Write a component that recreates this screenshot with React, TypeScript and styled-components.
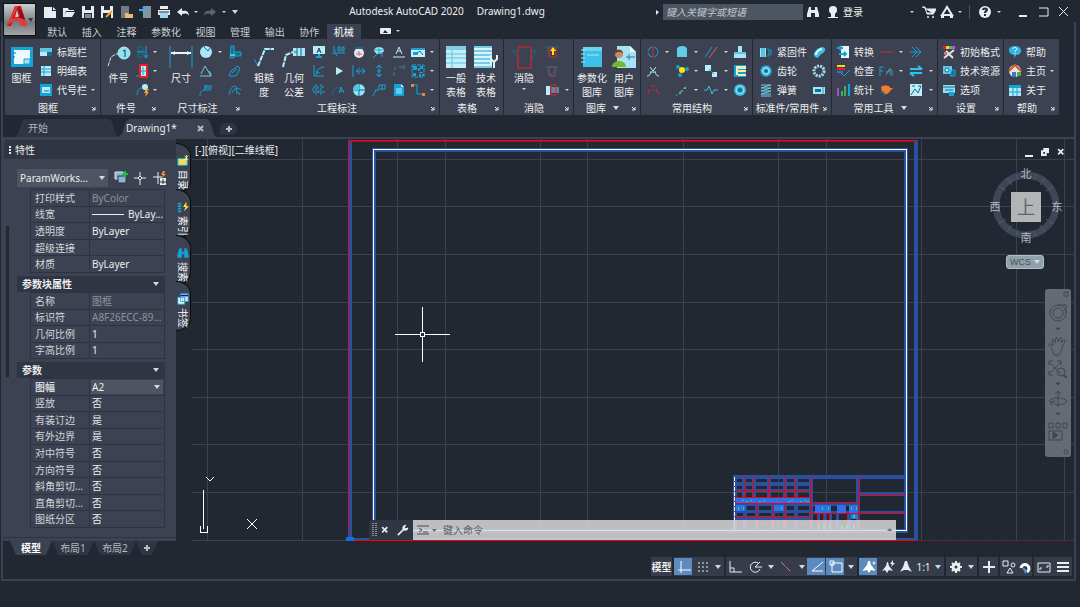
import React, { ReactNode } from 'react';
import styled, { createGlobalStyle, css } from 'styled-components';

const color = {
  bg: '#222831',
  panel: '#3c4251',
  sunken: '#2f3542',
  line: '#2d3340',
  text: '#eceef0',
  dim: '#8d939c',
  active: '#5b8bbf',
};
const C = '#14a3d6';
const L = '#b9ecfb';
const D = '#12708f';
const R = '#ee1c24';
const W = '#e9edf0';

const Global = createGlobalStyle`
  * { box-sizing: border-box; }
  body {
    margin: 0;
    background: ${color.bg};
    color: ${color.text};
    font-family: "Noto Sans", "Noto Sans CJK SC", sans-serif;
    font-size: 10px;
    line-height: 14px;
  }
  button, input, select { font: inherit; color: inherit; border: 0; margin: 0; padding: 0; background: none; }
  button { cursor: pointer; white-space: nowrap; }
  svg { flex: none; }
`;

/* ---------- icons ---------- */

const small: Record<string, ReactNode> = {
  titleBlock: <><path d="M1 3h12v8H1z" fill={L} /><path d="M1 3h12v4H1z" fill="#63c3dd" /><path d="M8 7h5v4H8z" fill={D} /></>,
  list: <><path d="M2 2h10v10H2z" fill={L} /><path d="M2 5h10M2 8h10M5 2v10" stroke={C} /></>,
  codeBlock: <><path d="M1 1h12v12H1z" fill={C} /><path d="M3 4h8v6H3z" fill={L} /><path d="M5 8h5" stroke={D} /></>,
  align: <><path d="M2 2h5v4H2zM2 9h5v3H2z" fill="none" stroke={D} /><path d="M10 1v12m-2-3 2 3 2-3M1 7h8" fill="none" stroke={C} /></>,
  merge: <><path d="M4 1h7v12H4z" fill={L} stroke={R} strokeWidth="2" /><path d="M7 3v8M5 7h5M0 12h3" stroke={C} /></>,
  editBalloon: <><path d="M1 12c1-6 2-7 5-7" fill="none" stroke={C} /><circle cx="9" cy="4" r="3" fill={L} /><path d="m10 6-2 4h2l-1 4 4-5h-2l2-3z" fill="#f2a43c" /></>,
  sphere: <><circle cx="7" cy="7" r="6" fill="#a9e8f8" /><path d="m5 2 4 4 2-3" fill="none" stroke={D} /></>,
  angle: <path d="M1 12h11L6 2 2 10M10 7c1 1 2 3 2 5" fill="none" stroke="#6ecbe4" />,
  chamfer: <path d="M1 13c0-4 1-5 4-6h7M5 3h8M5 5h8M5 7l3-5" fill="none" stroke={C} />,
  pipe: <><path d="M3 1h3v12H2zM6 7h7v4H6" fill={D} stroke={C} /><path d="M2 10h5" stroke={L} /></>,
  slot: <path d="m1 12 2-5 7-5 2 3-4 7zM4 9l5-4" fill="none" stroke={C} />,
  arc: <path d="M1 12c1-6 3-9 6-9M4 10c2-5 6-6 9-3M8 3l1 8M10 9l2 3" fill="none" stroke={C} />,
  textBox: <><path d="M1 1h12v8H1z" fill={L} /><path d="m5 8 2-5 2 5M6 6h2" fill="none" stroke="#1c4152" /><path d="M7 9v3M4 12h6" stroke={C} strokeWidth="2" /></>,
  weld: <path d="M0 8h3l2 3M3 8h10M2 1v5h2M6 2h2v4H6zM10 2h2v4h-2z" fill="none" stroke={C} />,
  clock: <><circle cx="7" cy="8" r="5" fill="#e3e6e6" /><path d="M3 3h8" stroke={D} strokeWidth="2" /><path d="M7 6v5M4 9h6" stroke="#d4707a" /></>,
  fan: <><path d="M2 6a5 4 0 0 1 10 0l-3 3H5z" fill="#a9e7f5" /><path d="m1 13 4-4M7 2v7M3 5h8" stroke={C} /><path d="M6 8h4v4" fill="none" stroke={C} /></>,
  datum: <path d="m4 9 3-7 3 7M5 6h4M1 12h12" fill="none" stroke={L} />,
  card: <><path d="M0 3h14v9H0z" fill="#c9f0fa" /><path d="M0 3h14v2H0zM2 7h5v3H2z" fill={C} /><path d="m6 8 3-2 3 4" fill="none" stroke={D} /></>,
  corner: <path d="M2 1v11h10M4 12c0-5 2-8 8-9M5 6v3h3" fill="none" stroke={C} />,
  play: <path d="M4 3v8l7-4z" fill={L} />,
  leftBar: <path d="M1 1v12M13 7H4m4-3L4 7l4 3M10 4l3 3-3 3" fill="none" stroke={C} />,
  updown: <path d="M7 1v12M4 4l3-3 3 3M4 10l3 3 3-3M5 7h4" fill="none" stroke={C} />,
  dashes: <path d="M2 12V8M2 6l2-3M7 3h4m1-2v4" fill="none" stroke="#4c7f95" />,
  qr: <><path d="M1 1h12v12H1z" fill="none" stroke={C} strokeDasharray="4 1" /><path d="M2 2h4v4H2zM9 2h3v3H9zM2 9h3v3H2zM7 4h2v3H7zM8 8h4v1H8zM8 10h2v3H8zM11 10h2v2h-2z" fill={C} /></>,
  tolerance: <path d="M1 4h5v5H1zM9 1v12M4 1v12M6 9h7M9 4h4" fill="none" stroke={C} strokeDasharray="3 1" />,
  noteA: <><path d="M0 12c1-5 2-7 6-7" fill="none" stroke={D} /><path d="m7 10 2-6 3 6M8 8h3" fill="none" stroke={C} /></>,
  compass: <><circle cx="7" cy="7" r="6" fill="#8fe4f7" /><path d="M7 1v12M1 7h12" stroke={D} /><path d="M7 7V1a6 6 0 0 0-6 6z" fill="#4fc6e8" /></>,
  lineNote: <path d="m1 13 3-6M3 7h4V2h6v4H8M10 2v5" fill="none" stroke={C} />,
  page: <><path d="M2 1h7l3 3v9H2z" fill={C} /><path d="M4 6h6M4 8h6M4 10h6" stroke={L} /><path d="M9 1v3h3z" fill={L} /></>,
  stepLine: <><path d="M2 2h4v9h6" fill="none" stroke={C} /><path d="M0 1h3v3H0zM11 10h3v3h-3z" fill="#e8862c" /></>,
  hideUp: <><path d="M0 2h14M2 3l3 8M12 4l-2 4" fill="none" stroke={D} /><path d="M4 3h7v9H4z" fill="none" stroke={R} /><path d="m8 2-3 4h2v4h2V6h2z" fill="#ffe500" /></>,
  hideEdit: <><path d="M0 3h14M2 4l4 7 6-7" fill="none" stroke={D} /><path d="M4 3h6v9H4z" fill="none" stroke="#a14456" /></>,
  hideView: <><path d="M1 3h4v9H1z" fill={L} /><path d="M6 4h8v6H6z" fill="#5d8a9c" /><path d="M6 2h5v10H6z" fill="none" stroke={R} /></>,
  hole: <><circle cx="7" cy="7" r="5" fill="none" stroke={C} strokeDasharray="6 2" /><path d="M7 1v12" stroke="#b53242" /></>,
  round: <path d="M2 4c0-4 10-4 10 0v8H2z" fill="#62cdea" />,
  diag: <><path d="m1 12 7-10" stroke={C} /><path d="m5 13 8-11" stroke="#e0576a" /></>,
  shaft: <><path d="M5 1h4v6h4v6H1V7h4z" fill="#a8e6f6" /><path d="M1 8h12" stroke={C} /></>,
  cross: <path d="M1 12c3 0 3-2 4-4M13 12c-3 0-3-2-4-4M4 3l3 4 3-4M4 8h6" fill="none" stroke={L} />,
  pins: <><circle cx="3" cy="3" r="2" fill={C} /><circle cx="12" cy="5" r="2" fill={C} /><circle cx="5" cy="11" r="2" fill={C} /><circle cx="7" cy="6" r="3" fill="#ffe500" /></>,
  squares: <><path d="M1 1h6v6H1zM8 8h5v5H8z" fill={L} /><path d="m5 5 5 5" stroke={C} /></>,
  bolt: <><path d="M1 1h12v12H1z" fill={C} /><path d="M3 2h10v3H3zM3 5h2v6H3zM5 6h8v2H5zM5 10h8v2H5z" fill="#f2edb0" /></>,
  redCurve: <path d="m2 11 2-5m1-3h4m1 3 3 5M6 6l2 2" fill="none" stroke={R} />,
  dotLine: <><path d="M1 13 12 2" stroke={C} strokeDasharray="3 2" /><path d="M4 9h2v2H4zM9 4h2v2H9z" fill="#3fc46b" /><path d="M6 7h2v2H6z" fill="#e0576a" /></>,
  wave: <path d="M0 7h3l2-4 3 8 2-4h4" fill="none" stroke="#4fb9d8" />,
  bearing: <><circle cx="7" cy="7" r="6" fill="#35b4df" /><circle cx="7" cy="7" r="4" fill="none" stroke="#9be4f6" /><circle cx="7" cy="7" r="2" fill={D} /></>,
  nut: <><path d="M1 3h6v9H1z" fill="#9ce2f4" /><path d="M3 3v9M5 3v9M8 4h2v7H8M12 4v6" stroke={C} fill="none" /></>,
  rod: <><path d="M2 11c-1-4 3-8 8-9 4 0 4 4 1 6-3 1-3 4-6 5z" fill="#35bfe4" /><path d="M4 10c0-3 3-6 6-6" stroke="#dff8fe" strokeWidth="2" fill="none" /></>,
  gear: <><circle cx="7" cy="7" r="5" fill="#7cd9f0" stroke={C} strokeWidth="2" strokeDasharray="2 1" /><circle cx="7" cy="7" r="2" fill={D} /></>,
  ring: <circle cx="7" cy="7" r="5" fill="none" stroke="#a4e2f1" strokeWidth="3" strokeDasharray="2 1" />,
  spring: <path d="M2 2h10L2 5h10L2 8h10L2 11h10M2 13h10" fill="none" stroke="#6fd1ea" />,
  key: <><path d="M1 4h12v7H1z" fill="#a5e5f5" /><path d="M3 6h6v3H3z" fill={D} /><path d="M11 4v7" stroke={C} /></>,
  convert: <><path d="M5 1h8v12H5z" fill="#e6f8fc" /><path d="M1 3h6m-2-2-2 2 2 2M3 9h7m-2-2 2 2-2 2" fill="none" stroke={C} strokeWidth="2" /></>,
  redLine: <path d="M1 7h13" stroke="#b53242" />,
  forward: <path d="m3 2 5 5-5 5M7 2l5 5-5 5M1 7h11" fill="none" stroke={C} />,
  check: <><path d="M1 2h8" stroke="#ffd21f" strokeWidth="2" /><path d="M1 5h8" stroke={R} strokeWidth="2" /><path d="M1 8h6" stroke="#4a60e8" strokeWidth="2" /><path d="m5 9 3 3 6-6" fill="none" stroke={C} /></>,
  fx: <><path d="M1 12V3h4M1 7h3" fill="none" stroke={C} /><path d="m7 11 4-7v7M7 8l6-2v6" fill="none" stroke="#4f93ab" /></>,
  swap: <path d="M1 5h12M9 2l4 3M1 9h12M1 9l4 3" fill="none" stroke="#31c0ee" strokeWidth="2" />,
  stats: <><path d="M1 5h2v8H1z" fill="#a04fc8" /><path d="M5 8h2v5H5z" fill="#35b35a" /><path d="M8 3h2v10H8z" fill="#35b35a" /><path d="M12 1h2v12h-2z" fill={C} /></>,
  bird: <><path d="M2 4c3-2 9-2 9 1l3 0-3 3c-2 4-6 4-8 1z" fill="#f47b2a" /><path d="M1 9h4v4" stroke={D} fill="none" /></>,
  picture: <><path d="M1 1h12v12H1z" fill="#bfeef9" /><path d="m2 12 4-6 3 4 3-7M9 3h3M3 3h3" fill="none" stroke={D} /></>,
  palette: <><path d="M1 1h3v3H1z" fill={R} /><path d="M4 1h3v3H4z" fill="#ffd21f" /><path d="M7 1h3v3H7z" fill="#3bc45f" /><path d="M10 1h3v3h-3z" fill="#c74be0" /><path d="M2 13 12 5M4 6l7 7" stroke="#e9e3e8" strokeWidth="2" /><path d="M2 7h3v3H2z" fill="#d86f8e" /></>,
  resource: <><path d="M1 2h9v8H1z" fill="#5ccbe9" /><circle cx="5" cy="6" r="2" fill="#d4f5fc" stroke={D} /><path d="M10 6h3v6H8z" fill={D} stroke={C} /></>,
  options: <><path d="M1 2h12v8H1z" fill="#8fdff3" /><path d="M1 4h12M3 7h8" stroke={D} /><path d="M7 9h5v4H7z" fill={C} /></>,
  help: <><path d="M7 1c8 0 8 9 1 9l-2 3v-3C-1 9-1 1 7 1z" fill="#31b5e0" /><path d="M5 4c0-2 4-2 4 0 0 1-2 1-2 3M7 8v1" stroke="#e8fbff" fill="none" /></>,
  home: <><circle cx="7" cy="7" r="6" fill="#e6e3dc" /><path d="m1 7 6-6 6 6" fill="none" stroke="#d5542f" strokeWidth="2" /><path d="M4 8h4v5H4z" fill="#3d78c8" /><path d="M9 8h4v4H9z" fill="#58a93c" /></>,
  about: <><path d="M1 2h12v11H1z" fill="#aee9f8" /><path d="M1 2h12v3H1z" fill={C} /><path d="M1 9h12M5 5v8M9 5v8" stroke={C} /></>,
};

const big: Record<string, ReactNode> = {
  frame: <><path d="M1 2h22v20H1z" fill={C} /><path d="M4 5h16v14H4z" fill="#e9fbff" /><path d="M14 14h6v5h-6z" fill="#a7dfef" stroke={C} /><path d="M3 8h3M3 12h2" stroke={D} /></>,
  balloon: <><path d="m1 21 3-9 5-3h3" fill="none" stroke={L} strokeDasharray="4 1" /><circle cx="17" cy="8" r="6" fill="#8ee0f3" stroke={L} /><path d="m16 6 2-1v7" fill="none" stroke="#16394a" /></>,
  dim: <><path d="M1 1v22M23 1v22" stroke={C} /><path d="M2 8h20" stroke="#dff7fd" strokeWidth="2" /><path d="m2 8 4-2v4zM22 8l-4-2v4z" fill="#dff7fd" /></>,
  rough: <><path d="m2 14 4 7 7-17h9" fill="none" stroke={C} /><path d="m6 21 7-17h9" fill="none" stroke={L} strokeWidth="2" strokeDasharray="5 1" /></>,
  geometry: <><path d="m1 22 3-12 7-3" fill="none" stroke={L} strokeWidth="2" strokeDasharray="5 1" /><path d="M11 3h12v8H11z" fill="#a8e6f6" /><path d="M15 3v8M19 3v8M12 7h3" stroke={D} /></>,
  table: <><path d="M2 1h20v22H2z" fill="#c4eefa" /><path d="M2 1h20v4H2z" fill="#7bcfe9" /><path d="M2 9h20M2 13h20M2 18h20M8 5v18" stroke="#5cc3e2" /></>,
  techTable: <><path d="M0 1h18v22H0z" fill="#d7f4fb" /><path d="M0 2h18M0 6h18M0 10h18M0 14h16M0 18h16M0 22h18" stroke={C} /><path d="M17 10v4l3 3 3-3v-4M20 16v7" fill="none" stroke="#d7f4fb" strokeWidth="2" /></>,
  hide: <><path d="M0 6h25M1 6l10 13h5L24 6" fill="none" stroke={D} /><path d="M6 2h13v21H6z" fill={color.panel} stroke={R} strokeWidth="1" /></>,
  library: <><path d="M3 2h19v20H3z" fill="#3cc0ea" /><path d="M3 2h19v4H3z" fill="#6ad5f2" /><path d="M1 5h4M1 9h4M1 13h4M1 17h4M7 10h12" stroke="#a7e9fa" /></>,
  userLib: <><path d="M5 1h13l6 6v16H5z" fill="#a7e1f3" /><path d="M18 1v6h6z" fill="#e9fbff" /><path d="M14 12h9M17 9v6" stroke="#2a7a96" /><circle cx="7" cy="9" r="4" fill="#c98b5b" /><path d="M3 9c0-6 8-6 8 0-2-3-5-3-8 0z" fill="#6d3f22" /><path d="M0 22c0-8 14-8 14 0z" fill="#76b72c" /></>,
};

const chrome: Record<string, ReactNode> = {
  newFile: <><path d="M1 2h8v4h4v7H1z" fill={W} /><path d="M10 2l3 3h-3z" fill={W} /></>,
  open: <path d="M1 12V3h5l1 2h5v1H4l-2 5 2-4h9l-3 5z" fill={W} />,
  save: <><path d="M1 1h12v12H1z" fill={W} /><path d="M4 1h6v4H4zM3 8h8v5H3z" fill={color.bg} /><path d="M4 10h6M4 12h6" stroke={W} /></>,
  saveAs: <><path d="M1 1h12v12H1z" fill={W} /><path d="M4 1h6v4H4zM3 8h8v5H3z" fill={color.bg} /><path d="m6 12 6-6" stroke="#f0a030" strokeWidth="2" /></>,
  openCloud: <><path d="M2 1h8v12H2z" fill="#747b84" /><path d="M6 8h3l1 1h4v4H6z" fill="#e5c06d" /></>,
  saveCloud: <><path d="M5 1h8v12H5z" fill="#8b929a" /><path d="M1 5h7M5 2l3 3-3 3" stroke="#4aa8ea" strokeWidth="2" fill="none" /></>,
  print: <><path d="M3 1h8v3H3zM1 5h12v5H1z" fill={W} /><path d="M3 8h8v5H3z" fill="#9dd8f1" /><path d="M2 7h10" stroke={color.bg} /></>,
  undo: <path d="m1 7 5-4v3c4-1 7 0 7 5-1-3-4-3-7-2v2z" fill={W} />,
  redo: <path d="M13 7 8 3v3C4 5 1 6 1 11c1-3 4-3 7-2v2z" fill="#5c6470" />,
  binoc: <path d="M3 2h2v3h4V2h2l2 7v3H9V8H5v4H1V9z" fill={W} />,
  user: <><circle cx="7" cy="5" r="4" fill={W} /><path d="M2 12h10v1H2zM5 8h4v4H5z" fill={W} /></>,
  cart: <><path d="M0 2h3l2 7h7M3 4h11l-2 4H5" stroke={W} fill={W} /><circle cx="6" cy="12" r="1" fill={W} /><circle cx="11" cy="12" r="1" fill={W} /></>,
  appStore: <path d="M7 2 2 10h10zM1 12h3M10 12h3" fill="none" stroke={W} strokeWidth="2" />,
  question: <><circle cx="7" cy="7" r="6" fill={W} /><path d="M5 5c0-2 4-2 4 0 0 1-2 1-2 3M7 9v2" fill="none" stroke={color.bg} strokeWidth="2" /></>,
  min: <path d="M3 11h8" stroke={W} strokeWidth="2" />,
  max: <path d="M2 3h9v8H2" fill="none" stroke={W} strokeWidth="1" />,
  close: <path d="m2 2 9 9M11 2l-9 9" stroke={W} />,
  closeBold: <path d="m2 2 9 9M11 2l-9 9" stroke={W} strokeWidth="3" />,
  collapse: <><rect x="2" y="4" width="11" height="6" rx="1" fill={W} /><path d="M5 9l2-3 3 3z" fill={color.bg} /></>,
  blockSel: <><path d="M1 1h8v7H1z" fill="#8fb3d2" stroke="#d8e6f2" /><path d="M4 5h8v7H4z" fill="#8fb3d2" stroke="#2b3342" /><path d="M8 3h6M11 0v6" stroke="#18c63a" strokeWidth="2" /></>,
  pick: <path d="M7 1v4M7 9v5M1 7h4M9 7h4M5 7l2-2 2 2-2 2z" stroke={W} fill="none" />,
  quick: <><path d="M5 1v12M0 6h9" stroke={W} /><path d="m10 0-2 4h2l-1 3 4-4h-2l1-3z" fill="#f08a3c" /><path d="M7 7h6v7H7z" fill={W} /><path d="M10 8v5M7 11h6" stroke={color.bg} /></>,
  /* status bar */
  gridOn: <path d="M4 1v12M1 10h13" stroke="#fff" fill="none" />,
  dots: <path d="M2 3h10M2 7h10M2 11h10" stroke={W} strokeDasharray="2 2" />,
  ortho: <path d="M2 1v11h12M2 8h4v4" stroke={W} fill="none" />,
  polar: <path d="M12 9a5 5 0 1 1-2-6M7 7h7M7 7l5-5" stroke={W} fill="none" />,
  iso: <path d="m2 2 10 10" stroke="#e0707a" strokeDasharray="6 1" />,
  track: <path d="M13 2 2 11h11" stroke="#fff" fill="none" />,
  osnap: <path d="M3 3h10v9H3zM1 1h4v4H1z" stroke="#fff" fill={color.active} />,
  person: <><path d="M6 1h2l1 4 4 5v1l-4-1-2 3-2-3-4 1v-1l4-5z" fill="#fff" /><circle cx="12" cy="3" r="1" fill="none" stroke="#fff" /></>,
  personBolt: <><path d="M6 2h1l1 4 4 5-4-1-2 3-2-3-3 1 4-5z" fill={W} /><path d="M12 0 9 4h2l-1 3 4-4h-2z" fill={W} /></>,
  scale: <path d="M6 1h2l2 6 3 5-4-2H5l-4 2 3-5z" fill={W} />,
  cog: <><circle cx="7" cy="7" r="3" fill="none" stroke={W} strokeWidth="3" /><path d="M7 1v3M7 10v3M1 7h3M10 7h3M3 3l2 2M9 9l2 2M11 3 9 5M5 9l-2 2" stroke={W} strokeWidth="2" /></>,
  plus: <path d="M7 1v12M1 7h12" stroke={W} strokeWidth="2" />,
  shapes: <><path d="M1 1h5v5H1zM5 13l3-5 3 5z" stroke={W} fill="none" /><circle cx="11" cy="5" r="2" stroke={W} fill="none" /></>,
  hardware: <><path d="M3 8a4 4 0 1 1 6 4" stroke="#fff" strokeWidth="3" fill="none" /><path d="M5 9c2 0 3 2 2 4" stroke="#4a9ae0" strokeWidth="2" fill="none" /></>,
  full: <path d="M1 3h12v9H1zM3 10V8h2M11 5v2H9" stroke={W} fill="none" />,
  menu: <path d="M1 3h12M1 7h12M1 11h12" stroke={W} strokeWidth="2" />,
  /* tool tabs */
  toc: <><path d="M1 4h11v8H1z" fill="#ecdf5a" stroke={C} /><path d="m9 1 4 5M13 1 8 6M11 0v6" stroke="#fff58a" /></>,
  index: <><path d="M1 3h4M1 6h4M1 9h4M1 12h4" stroke={C} strokeWidth="2" /><path d="m11 1-4 6h3l-2 5 6-6h-3z" fill="#ffe82a" /></>,
  find: <path d="M3 2h2v4h4V2h2l2 7v3H9V8H5v4H1V9z" fill={C} stroke={C} />,
  bookmark: <><path d="M1 5h8v8H1zM4 1h9v9H4z" fill="#eefaff" stroke={C} /><path d="M4 3h9" stroke="#111c86" strokeWidth="2" /><path d="M6 6h6M6 8h6" stroke="#5b7890" strokeDasharray="1 1" /></>,
  restore: <><path d="M4 0h10v9H4z" fill={W} /><path d="M0 4h10v10H0z" fill={W} /><path d="M4 7h3v3H4z" fill={color.bg} /></>,
  wrench: <><path d="m1 13 7-7" stroke={W} strokeWidth="2" /><path d="M7 7C5 4 8 0 11 1L9 4l1 1 3-1c1 3-3 5-6 3z" fill={W} /></>,
};

function Glyph({ set, name, size = 14 }: { set: Record<string, ReactNode>; name: string; size?: number }) {
  const box = set === big ? 24 : 14;
  return (
    <svg width={size} height={size} viewBox={`0 0 ${box} ${box}`} aria-hidden="true">
      {set[name]}
    </svg>
  );
}

const Caret = ({ wide = false }: { wide?: boolean }) => (
  <svg width={wide ? 6 : 4} height={wide ? 4 : 2} viewBox={wide ? '0 0 6 4' : '0 0 4 2'} aria-hidden="true">
    <path d={wide ? 'M0 0h6L3 4z' : 'M0 0h4L2 2z'} fill="#d5d8dc" />
  </svg>
);

/* ---------- shell ---------- */

const Page = styled.div`
  position: relative;
  display: flex;
  flex-direction: column;
  min-height: 100vh;
  padding: 0 4px 26px 1px;
  background: ${color.bg};
`;
const AppButton = styled.button`
  position: absolute;
  z-index: 2;
  left: 3px;
  top: 3px;
  width: 33px;
  height: 33px;
  border: 1px solid #0d0f12;
  background: linear-gradient(#cdcfd1, #77797c 60%, #a4a6a9);
`;
const TitleBar = styled.header`
  display: flex;
  height: 22px;
  padding-left: 39px;
`;
const TitleTools = styled.div`
  display: flex;
  align-items: center;
  height: 24px;
`;
const WindowButtons = styled(TitleTools)`
  margin-left: 6px;
`;
const Tool = styled.button<{ $w?: number; $end?: boolean }>`
  display: flex;
  flex: none;
  align-items: center;
  justify-content: ${(p) => (p.$end ? 'flex-end' : 'center')};
  gap: 4px;
  width: ${(p) => p.$w ?? 19}px;
  height: 18px;
  padding-right: ${(p) => (p.$end ? 6 : 0)}px;
`;
const Title = styled.h1`
  display: flex;
  flex: 1;
  justify-content: center;
  gap: 13px;
  margin: 0;
  font-size: 10px;
  font-weight: 400;
  line-height: 22px;
  white-space: nowrap;
`;
const Search = styled.input`
  width: 140px;
  height: 16px;
  padding: 0 3px;
  background: #4c5561;
  font-style: italic;
  &::placeholder { color: #c2c7cc; opacity: 1; }
`;
const Rule = styled.span`
  width: 1px;
  height: 14px;
  margin: 0 5px;
  background: #4c525e;
`;
const Frame = styled.div`
  display: flex;
  flex: 1;
  flex-direction: column;
  border: solid ${color.panel};
  border-width: 0 2px 2px;
`;

/* ---------- ribbon ---------- */

const RibbonBar = styled.div`
  display: flex;
  align-items: center;
  height: 17px;
  padding-left: 37px;
`;
const RibbonTabs = styled.nav`
  display: flex;
  align-self: flex-end;
  width: 321px;
`;
const RibbonTab = styled.button<{ $on?: boolean }>`
  flex: 1 0 auto;
  height: 15px;
  padding: 0 7px;
  line-height: 14px;
  color: ${(p) => (p.$on ? '#fff' : '#c9cdd1')};
  background: ${(p) => (p.$on ? color.panel : 'none')};
`;
const Ribbon = styled.div`
  display: flex;
  height: 76px;
  padding-left: 2px;
  overflow: hidden;
`;
const Panel = styled.section<{ $w: number; $pad: number; $join?: boolean }>`
  display: flex;
  flex: 0 0 ${(p) => p.$w}px;
  flex-direction: column;
  margin-right: ${(p) => (p.$join ? 0 : 1)}px;
  background: ${color.panel};
  > div { padding-left: ${(p) => p.$pad}px; }
`;
const PanelBody = styled.div`
  display: flex;
  flex: 1;
  padding-top: 3px;
`;
const PanelFoot = styled.footer`
  display: flex;
  align-items: center;
  height: 14px;
  white-space: nowrap;
  button { width: 9px; height: 12px; }
  button svg { display: block; }
`;
const PanelName = styled.span`
  display: flex;
  flex: 1;
  align-items: center;
  justify-content: center;
  gap: 7px;
`;
const BigTool = styled.button<{ $w: number }>`
  display: flex;
  flex: none;
  flex-direction: column;
  align-items: center;
  justify-content: flex-start;
  width: ${(p) => p.$w}px;
  padding-top: 3px;
  svg:first-child { margin-bottom: 2px; }
  svg + span + svg { margin-top: 3px; }
  span { line-height: 14px; }
`;
const Stack = styled.div<{ $icon: number; $label: number; $drop: number }>`
  display: grid;
  flex: none;
  grid-template-columns: ${(p) => p.$icon + p.$label}px ${(p) => p.$drop}px;
  grid-auto-rows: 19px;
`;
const StackTool = styled.button<{ $icon: number }>`
  display: grid;
  grid-template-columns: ${(p) => p.$icon}px 1fr;
  align-items: center;
  justify-items: center;
  column-gap: 3px;
  span { justify-self: start; }
`;
const DropCell = styled.button`
  display: flex;
  align-items: center;
  justify-content: center;
`;

type BigCol = { w: number; icon: string; lines: string[]; drop?: boolean };
type Row = [icon: string, label: string, drop?: boolean];
type StackCol = { icon: number; label?: number; drop?: number; rows: Row[] };
type PanelData = { name: string; w: number; pad: number; join?: boolean; menu?: boolean; bigs: BigCol[]; stacks: StackCol[] };

const panels: PanelData[] = [
  { name: '图框', w: 95, pad: 0, bigs: [{ w: 33, icon: 'frame', lines: ['图框'] }],
    stacks: [{ icon: 16, label: 34, drop: 10, rows: [['titleBlock', '标题栏'], ['list', '明细表'], ['codeBlock', '代号栏', true]] }] },
  { name: '件号', w: 59, pad: 0, join: true, bigs: [{ w: 35, icon: 'balloon', lines: ['件号'] }],
    stacks: [{ icon: 14, drop: 10, rows: [['align', '对齐', true], ['merge', '合并', true], ['editBalloon', '编辑', true]] }] },
  { name: '尺寸标注', w: 84, pad: 3, join: true, bigs: [{ w: 36, icon: 'dim', lines: ['尺寸'] }],
    stacks: [
      { icon: 14, drop: 14, rows: [['sphere', '直径', true], ['angle', '角度'], ['chamfer', '倒角']] },
      { icon: 16, rows: [['pipe', '轴'], ['slot', '槽'], ['arc', '弧长']] },
    ] },
  { name: '工程标注', w: 195, pad: 5, bigs: [{ w: 30, icon: 'rough', lines: ['粗糙', '度'] }, { w: 30, icon: 'geometry', lines: ['几何', '公差'] }],
    stacks: [
      { icon: 20, rows: [['textBox', '文字'], ['corner', '锥度'], ['tolerance', '公差']] },
      { icon: 20, rows: [['weld', '焊接'], ['play', '方向'], ['noteA', '引线']] },
      { icon: 20, rows: [['clock', '中心孔'], ['leftBar', '剖切'], ['compass', '圆孔']] },
      { icon: 20, rows: [['fan', '标记'], ['updown', '高度'], ['lineNote', '注释']] },
      { icon: 20, rows: [['datum', '基准'], ['dashes', '向视'], ['page', '说明']] },
      { icon: 18, drop: 10, rows: [['card', '符号', true], ['qr', '二维码', true], ['stepLine', '折线', true]] },
    ] },
  { name: '表格', w: 63, pad: 1, bigs: [{ w: 30, icon: 'table', lines: ['一般', '表格'] }, { w: 30, icon: 'techTable', lines: ['技术', '表格'] }], stacks: [] },
  { name: '消隐', w: 69, pad: 1, bigs: [{ w: 38, icon: 'hide', lines: ['消隐'], drop: true }],
    stacks: [{ icon: 18, drop: 12, rows: [['hideUp', '置前'], ['hideEdit', '编辑'], ['hideView', '显示', true]] }] },
  { name: '图库', w: 66, pad: 1, menu: true, bigs: [{ w: 34, icon: 'library', lines: ['参数化', '图库'] }, { w: 30, icon: 'userLib', lines: ['用户', '图库'] }], stacks: [] },
  { name: '常用结构', w: 111, pad: 3, bigs: [],
    stacks: [
      { icon: 18, drop: 10, rows: [['hole', '孔', true], ['cross', '相贯'], ['redCurve', '曲线']] },
      { icon: 20, drop: 8, rows: [['round', '圆角', true], ['pins', '销孔', true], ['dotLine', '中心线', true]] },
      { icon: 22, drop: 8, rows: [['diag', '平行', true], ['squares', '阵列', true], ['wave', '波浪线', true]] },
      { icon: 20, rows: [['shaft', '轴'], ['bolt', '螺栓'], ['bearing', '轴承']] },
    ] },
  { name: '标准件/常用件', w: 78, pad: 5, bigs: [],
    stacks: [
      { icon: 16, label: 33, rows: [['nut', '紧固件'], ['gear', '齿轮'], ['spring', '弹簧']] },
      { icon: 24, rows: [['rod', '型材'], ['ring', '轴承'], ['key', '键']] },
    ] },
  { name: '常用工具', w: 105, pad: 3, menu: true, bigs: [],
    stacks: [
      { icon: 16, label: 25, rows: [['convert', '转换'], ['check', '检查'], ['stats', '统计']] },
      { icon: 20, drop: 10, rows: [['redLine', '图线', true], ['fx', '公式', true], ['bird', '清理']] },
      { icon: 20, drop: 9, rows: [['forward', '前进'], ['swap', '交换', true], ['picture', '图片', true]] },
    ] },
  { name: '设置', w: 65, pad: 3, bigs: [],
    stacks: [{ icon: 16, label: 43, rows: [['palette', '初始格式'], ['resource', '技术资源'], ['options', '选项']] }] },
  { name: '帮助', w: 55, pad: 3, bigs: [],
    stacks: [{ icon: 16, label: 24, drop: 10, rows: [['help', '帮助'], ['home', '主页', true], ['about', '关于']] }] },
];

function RibbonPanel({ p }: { p: PanelData }) {
  return (
    <Panel $w={p.w} $pad={p.pad} $join={p.join} aria-label={p.name}>
      <PanelBody>
        {p.bigs.map((b) => (
          <BigTool key={b.icon} $w={b.w}>
            <Glyph set={big} name={b.icon} size={24} />
            {b.lines.map((t) => <span key={t}>{t}</span>)}
            {b.drop && <Caret />}
          </BigTool>
        ))}
        {p.stacks.map((s, i) => (
          <Stack key={i} $icon={s.icon} $label={s.label ?? 0} $drop={s.drop ?? 0}>
            {s.rows.map(([icon, label, drop]) => (
              <React.Fragment key={icon}>
                <StackTool $icon={s.icon} aria-label={label}>
                  <Glyph set={small} name={icon} />
                  {s.label && <span>{label}</span>}
                </StackTool>
                {drop ? <DropCell aria-label={`${label}菜单`}><Caret /></DropCell> : <span />}
              </React.Fragment>
            ))}
          </Stack>
        ))}
      </PanelBody>
      <PanelFoot>
        <PanelName>{p.name}{p.menu && <Caret wide />}</PanelName>
        <button aria-label={`${p.name}设置`}>
          <svg width="5" height="5" viewBox="0 0 5 5" aria-hidden="true"><path d="M1 1l3 3M4 1v3H1" stroke={W} fill="none" /></svg>
        </button>
      </PanelFoot>
    </Panel>
  );
}

/* ---------- document tabs ---------- */

const FileTabs = styled.nav`
  display: flex;
  align-items: flex-end;
  height: 24px;
  padding-left: 11px;
  border-bottom: 2px solid ${color.panel};
`;
const FileTab = styled.button<{ $on?: boolean; $w: number }>`
  display: flex;
  align-items: center;
  justify-content: space-between;
  width: ${(p) => p.$w}px;
  height: 18px;
  padding: 0 12px 0 ${(p) => (p.$on ? 8 : 14)}px;
  color: ${(p) => (p.$on ? color.text : '#b2b7bd')};
  background: ${(p) => (p.$on ? color.panel : color.sunken)};
  clip-path: polygon(0 100%, 4px 80%, 8px 15%, 11px 0, calc(100% - 9px) 0, calc(100% - 6px) 15%, calc(100% - 2px) 85%, 100% 100%);
`;
const AddTab = styled.button`
  width: 17px;
  height: 12px;
  margin: 0 0 2px 4px;
  border-radius: 6px 6px 6px 0;
  background: ${color.sunken};
  svg { display: block; margin: 0 auto; }
`;

/* ---------- workspace ---------- */

const Workspace = styled.main`
  display: grid;
  flex: 1;
  grid-template-columns: 173px 1fr;
  min-height: 402px;
`;
const Palette = styled.aside`
  display: flex;
  flex-direction: column;
  padding: 1px 0 3px 1px;
  background: ${color.panel};
`;
const PaletteTitle = styled.h2`
  display: flex;
  align-items: center;
  gap: 4px;
  height: 19px;
  margin: 0;
  padding-left: 4px;
  border-radius: 3px 3px 0 0;
  font-size: 10px;
  font-weight: 400;
  background: ${color.sunken};
`;
const PaletteTools = styled.div`
  display: flex;
  align-items: center;
  height: 18px;
  margin: 10px 0 2px 13px;
`;
const TypeSelect = styled.span`
  position: relative;
  width: 91px;
  height: 18px;
  margin-right: 3px;
  background: #4c5561;
  svg { position: absolute; right: 3px; top: 7px; }
  select { width: 100%; height: 100%; padding: 0 3px; appearance: none; font-size: 10px; }
  option { background: ${color.panel}; }
`;
const PaletteBody = styled.div`
  position: relative;
  display: flex;
  flex: 1;
  flex-direction: column;
  padding: 0 11px 0 13px;
  border-bottom: 1px solid ${color.line};
  &::before {
    content: '';
    position: absolute;
    left: 2px;
    top: 37px;
    width: 3px;
    height: 151px;
    background: ${color.bg};
  }
`;
const Section = styled.button`
  display: flex;
  align-items: center;
  justify-content: space-between;
  height: 16px;
  margin-top: 3px;
  padding: 0 6px 0 5px;
  font-weight: 700;
  background: ${color.sunken};
`;
const Props = styled.table<{ $h: number }>`
  width: 135px;
  height: ${(p) => p.$h}px;
  margin-left: 13px;
  border-collapse: collapse;
  table-layout: fixed;
  line-height: 12px;
  tr { height: 11%; }
  th, td {
    padding: 0 0 0 4px;
    border: 1px solid ${color.line};
    font-weight: 400;
    text-align: left;
    white-space: nowrap;
    overflow: hidden;
  }
  th { width: 59px; color: #d3d6da; }
  td { padding-left: 2px; }
`;
const Value = styled.span<{ $dim?: boolean }>`
  display: flex;
  align-items: center;
  gap: 4px;
  color: ${(p) => (p.$dim ? color.dim : color.text)};
`;
const Stroke = styled.i`
  width: 32px;
  height: 1px;
  background: ${W};
`;
const SizeSelect = styled(TypeSelect)`
  display: block;
  width: auto;
  height: 14px;
  margin: 0 1px 0 -1px;
  svg { top: 5px; }
  select { display: block; padding: 0 1px; }
`;

type Prop = { label: string; value: ReactNode; dim?: boolean };
const general: Prop[] = [
  { label: '打印样式', value: 'ByColor', dim: true },
  { label: '线宽', value: <><Stroke />ByLay...</> },
  { label: '透明度', value: 'ByLayer' },
  { label: '超级连接', value: '' },
  { label: '材质', value: 'ByLayer' },
];
const block: Prop[] = [
  { label: '名称', value: '图框', dim: true },
  { label: '标识符', value: 'A8F26ECC-89...', dim: true },
  { label: '几何比例', value: '1' },
  { label: '字高比例', value: '1' },
];
const params: [string, string][] = [
  ['竖放', '否'], ['有装订边', '是'], ['有外边界', '是'], ['对中符号', '否'],
  ['方向符号', '否'], ['斜角剪切...', '否'], ['直角剪切...', '否'], ['图纸分区', '否'],
];

function PropTable({ rows, h, children }: { rows: Prop[]; h: number; children?: ReactNode }) {
  return (
    <Props $h={h}>
      <tbody>
        {children}
        {rows.map((r) => (
          <tr key={r.label}>
            <th scope="row">{r.label}</th>
            <td><Value $dim={r.dim}>{r.value}</Value></td>
          </tr>
        ))}
      </tbody>
    </Props>
  );
}

/* ---------- drawing area ---------- */

const Canvas = styled.div`
  position: relative;
  overflow: hidden;
`;
const Sheet = styled.svg`
  position: absolute;
  inset: 0;
  width: 100%;
  height: 100%;
`;
const ToolTabs = styled.nav`
  position: relative;
  display: flex;
  flex-direction: column;
  width: 16px;
  padding-top: 4px;
  background: ${color.bg};
`;
const ToolTab = styled.button`
  display: flex;
  flex-direction: column;
  align-items: center;
  gap: 3px;
  width: 15px;
  height: 50px;
  margin-bottom: -4px;
  padding-top: 11px;
  padding-right: 1px;
  border: 1px solid #0b0d10;
  border-left: 0;
  border-radius: 0 15px 15px 0 / 0 13px 13px 0;
  background: ${color.panel};
  span { writing-mode: vertical-rl; text-orientation: sideways; line-height: 12px; font-size: 10px; color: #fff; }
`;
const ViewLabel = styled.button`
  position: absolute;
  left: 19px;
  top: 4px;
`;
const WindowTools = styled.div`
  position: absolute;
  right: 5px;
  top: 4px;
  display: flex;
`;
const Cube = styled.div`
  position: absolute;
  right: 9px;
  top: 27px;
  display: grid;
  grid-template: 16px 1fr 14px / 16px 1fr 16px;
  place-items: center;
  width: 78px;
  height: 79px;
  color: #b5b9be;
  font-size: 11px;
  > svg { position: absolute; inset: 0; }
  button { position: relative; }
`;
const Side = styled.button<{ $cell: string }>`
  grid-area: ${(p) => p.$cell};
`;
const Top = styled.button`
  grid-area: 2 / 2;
  width: 30px;
  height: 30px;
  font-size: 18px;
  line-height: 28px;
  color: #56657a;
  background: #b2b4b6;
`;
const Wcs = styled.button`
  position: absolute;
  right: 30px;
  top: 116px;
  display: flex;
  align-items: center;
  justify-content: space-between;
  width: 38px;
  height: 14px;
  padding: 0 3px;
  border: 1px solid #b4bdc2;
  border-radius: 3px;
  font-family: "Liberation Sans", sans-serif;
  font-size: 9px;
  line-height: 12px;
  color: #46525c;
  background: #8fa2aa;
`;
const NavBar = styled.div`
  position: absolute;
  right: 3px;
  top: 150px;
  width: 26px;
  height: 168px;
  border-radius: 3px;
  background: #666b73;
  svg { display: block; }
`;
const CommandLine = styled.form`
  position: absolute;
  left: 193px;
  right: 178px;
  bottom: 1px;
  display: flex;
  height: 20px;
  label { display: flex; flex: 1; align-items: center; background: rgba(215, 215, 217, 0.86); color: #4a4d53; }
  label > svg:first-child { margin: 0 3px 0 4px; }
  input { flex: 1; min-width: 0; padding-left: 6px; }
  input::placeholder { color: #5a5d63; opacity: 1; }
`;
const CommandGrip = styled.div`
  display: flex;
  align-items: center;
  width: 44px;
  padding-left: 3px;
  border-radius: 3px 0 0 0;
  background: ${color.sunken};
`;

const xs = [207, 302, 397, 445, 540, 587, 683, 778, 826, 921, 1016, 1064];
const ys = [159, 206, 254, 302, 349, 397, 444, 492, 540];
const marks = Array.from({ length: 46 }, (_, i) => 207 + i * 19);
const markRows = Array.from({ length: 21 }, (_, i) => 159 + i * 19);
const blue = '#2a519f';
const hot = '#2d70ee';
const bandV = [735, 744, 754, 769, 785, 796, 811];
const redV = [745, 754, 769, 785, 796];
const lowV = [745, 757, 773, 785, 796, 811];

function Drawing() {
  return (
    <Sheet viewBox="176 139 898 402" preserveAspectRatio="xMinYMin slice" aria-hidden="true" shapeRendering="crispEdges">
      <g fill="#303742">
        {marks.map((x) => markRows.map((y) => <rect key={`${x}-${y}`} x={x} y={y} width="1" height="1" />))}
      </g>
      <g fill="#3a4150">
        {xs.map((x) => <rect key={x} x={x} y="139" width="1" height="402" />)}
        {ys.map((y) => <rect key={y} x="192" y={y} width="882" height="1" />)}
      </g>
      <g fill={blue}>
        <rect x="348" y="140" width="4" height="400" />
        <rect x="914" y="140" width="4" height="400" />
        <rect x="372" y="148" width="536" height="4" />
        <rect x="372" y="148" width="4" height="385" />
        <rect x="904" y="148" width="4" height="385" />
        <rect x="372" y="529" width="536" height="4" />
        <rect x="350" y="538" width="568" height="2" />
      </g>
      <rect x="349" y="140" width="567" height="1" fill="#f00" />
      <rect x="349" y="141" width="567" height="1" fill="#8c1a3c" />
      <rect x="349" y="141" width="1" height="399" fill="#c5143a" />
      <rect x="349" y="540" width="567" height="1" fill="#f00" />
      <rect x="918" y="540" width="156" height="1" fill="#6d2430" />
      <rect x="346" y="537" width="8" height="4" fill="#0a70f0" />
      <g fill={blue}>
        <rect x="733" y="475" width="174" height="4" />
        <rect x="735" y="482" width="77" height="4" />
        <rect x="735" y="489" width="77" height="3" />
        <rect x="735" y="502" width="124" height="4" />
        <rect x="735" y="510" width="77" height="3" />
        <rect x="811" y="511" width="95" height="3" />
        <rect x="735" y="516" width="77" height="4" />
        <rect x="859" y="492" width="47" height="4" />
        {bandV.map((x) => <rect key={x} x={x - 2} y="475" width="4" height="28" />)}
        {lowV.map((x) => <rect key={x} x={x - 2} y="503" width="4" height="28" />)}
        <rect x="733" y="475" width="4" height="56" />
        <rect x="856" y="475" width="4" height="56" />
        {[817, 823, 829, 836, 848].map((x) => <rect key={x} x={x} y="513" width="3" height="18" />)}
      </g>
      <g fill={hot}>
        <rect x="736" y="498" width="75" height="5" />
        <rect x="736" y="505" width="9" height="6" />
        <rect x="773" y="505" width="11" height="6" />
        <rect x="815" y="505" width="16" height="8" />
        <rect x="837" y="505" width="9" height="8" />
        <rect x="849" y="505" width="9" height="8" />
        <rect x="851" y="514" width="7" height="5" />
      </g>
      <g fill="#f00012">
        <rect x="734" y="490" width="77" height="1" />
        <rect x="734" y="497" width="77" height="1" />
        <rect x="734" y="503" width="125" height="1" />
        <rect x="811" y="513" width="96" height="1" />
        <rect x="734" y="517" width="77" height="1" />
        <rect x="734" y="523" width="77" height="1" />
        <rect x="860" y="494" width="46" height="1" />
        {redV.map((x) => <rect key={x} x={x - 1} y="477" width="1" height="20" />)}
        {[757, 773, 785].map((x) => <rect key={x} x={x} y="504" width="1" height="26" />)}
        {[817, 823, 829, 847].map((x) => <rect key={x} x={x} y="514" width="1" height="16" />)}
        <rect x="810" y="477" width="1" height="53" />
        <rect x="858" y="477" width="1" height="53" />
      </g>
      <g fill="#1ce44a">
        {[742, 746, 750, 759, 763, 788, 791, 800, 804, 807].map((x, i) => <rect key={x} x={x} y={500 + (i % 2)} width="2" height="1" />)}
        {[738, 743, 781, 822, 828, 851, 856].map((x) => <rect key={x} x={x} y="507" width="1" height="3" />)}
        {[818, 823, 829, 841, 846, 853].map((x) => <rect key={x} x={x} y="525" width="2" height="4" />)}
        <rect x="853" y="515" width="2" height="3" />
      </g>
      <rect x="373" y="149" width="533" height="1" fill="#fff" />
      <rect x="373" y="149" width="1" height="382" fill="#fff" />
      <rect x="906" y="149" width="1" height="382" fill="#fff" />
      <rect x="373" y="530" width="533" height="1" fill="#fff" />
      <path d="M734.500 477v53" stroke="#fff" strokeDasharray="4 1" />
      <g fill="none" stroke="#fff">
        <path d="M422.500 307v25M422.500 337v25M395 334.500h25M425 334.500h25M420.500 332.500h4v4h-4z" />
        <path d="M203.500 490v39M200.500 526v6h7v-6" />
        <path d="M206 477l4 4 4-4M247 519l10 10M257 519l-10 10" />
      </g>
    </Sheet>
  );
}

function NavIcons() {
  return (
    <svg width="26" height="168" viewBox="0 0 26 168" fill="none" stroke="#41464f" aria-hidden="true">
      <path d="M19 3h4v4h-4z" />
      <circle cx="13" cy="24" r="8" /><circle cx="13" cy="24" r="5" /><path d="M13 16h8v8" />
      <path d="M11 39h4l-2 2zM11 94h4l-2 2zM11 124h4l-2 2z" fill="#41464f" />
      <path d="M7 60c-2-3-4-4-3-5s3 1 4 2l-1-6c1-2 2-1 3 3l1-5c1-2 2-1 2 4l2-4c2-1 2 1 1 5l3-3c2 0 1 2-1 5-1 4-2 7-4 10h-5z" />
      <path d="m4 73 12 12M16 73 4 85M4 76v-4h4M12 72h4v4M4 82v4h4" /><circle cx="16" cy="83" r="4" /><path d="m18 86 4 3" strokeWidth="2" />
      <path d="M13 118V102m-3 3 3-3 3 3M4 112c3-4 15-4 18 0-3 5-11 5-15 1m0 4-2-4 5-1" />
      <path d="M4 134h4v5H4zM11 134h4v5h-4zM18 134h4v5h-4zM4 142h13v9H4z" /><path d="m8 143 5 3-5 4z" fill="#41464f" />
      <circle cx="21" cy="163" r="2" />
    </svg>
  );
}

/* ---------- bottom bars ---------- */

const LayoutTabs = styled.nav`
  display: flex;
  height: 14px;
  padding-left: 7px;
`;
const LayoutTab = styled.button<{ $on?: boolean }>`
  width: 42px;
  height: 14px;
  line-height: 13px;
  color: ${(p) => (p.$on ? '#fff' : '#b2b7bd')};
  font-weight: ${(p) => (p.$on ? 700 : 400)};
  background: ${(p) => (p.$on ? color.panel : color.sunken)};
  clip-path: polygon(0 0, 100% 0, calc(100% - 6px) 100%, 6px 100%);
  &:last-child { width: 22px; }
  svg { display: block; margin: 0 auto; }
`;
const StatusBar = styled.footer`
  display: flex;
  justify-content: flex-end;
  gap: 2px;
  height: 24px;
  padding: 2px 2px 3px 0;
`;
const Group = styled.div`
  display: flex;
  align-items: center;
  background: #363c4a;
`;
const StatusTool = styled.button<{ $w: number; $on?: boolean; $bold?: boolean }>`
  display: flex;
  align-items: center;
  justify-content: center;
  width: ${(p) => p.$w}px;
  height: 17px;
  ${(p) => p.$on && css`background: ${color.active}; box-shadow: inset -1px 0 #363c4a;`}
  ${(p) => p.$bold && css`font-weight: 700;`}
`;

type Status = { w: number; icon?: string; text?: string; on?: boolean; bold?: boolean; label: string };
const drop = (w: number, label: string): Status => ({ w, icon: 'drop', label });
const status: Status[][] = [
  [{ w: 21, text: '模型', bold: true, label: '模型' }],
  [{ w: 19, icon: 'gridOn', on: true, label: '栅格' }, { w: 19, icon: 'dots', label: '捕捉' }, drop(12, '捕捉菜单')],
  [{ w: 18, icon: 'ortho', label: '正交' }, { w: 21, icon: 'polar', label: '极轴' }, drop(11, '极轴菜单'), { w: 20, icon: 'iso', label: '等轴测' }, drop(11, '等轴测菜单'),
    { w: 19, icon: 'track', on: true, label: '追踪' }, { w: 19, icon: 'osnap', on: true, label: '对象捕捉' }, drop(12, '对象捕捉菜单')],
  [{ w: 19, icon: 'person', on: true, label: '注释可见性' }, { w: 19, icon: 'personBolt', label: '自动缩放' }, { w: 18, icon: 'scale', label: '注释比例' }, { w: 17, text: '1:1', label: '1:1' }, drop(12, '比例菜单')],
  [{ w: 19, icon: 'cog', label: '切换工作空间' }, drop(12, '工作空间菜单')],
  [{ w: 19, icon: 'plus', label: '注释监视器' }],
  [{ w: 17, icon: 'shapes', label: '隔离对象' }, { w: 15, icon: 'hardware', label: '硬件加速' }],
  [{ w: 19, icon: 'full', label: '全屏显示' }, { w: 19, icon: 'menu', label: '自定义' }],
];

const tabs = ['默认', '插入', '注释', '参数化', '视图', '管理', '输出', '协作', '机械'];
const quick: [string, string][] = [
  ['newFile', '新建'], ['open', '打开'], ['save', '保存'], ['saveAs', '另存为'], ['openCloud', '从云打开'],
  ['saveCloud', '保存到云'], ['print', '打印'], ['undo', '放弃'],
];
const toolTabs: [string, string][] = [['toc', '目录'], ['index', '索引'], ['find', '搜索'], ['bookmark', '书签']];

const PlusMark = () => (
  <svg width="8" height="8" viewBox="0 0 8 8" aria-hidden="true"><path d="M4 1v6M1 4h6" stroke="#b9bdc3" strokeWidth="2" /></svg>
);

export default function App() {
  return (
    <Page>
      <Global />
      <AppButton aria-label="应用程序菜单">
        <svg width="31" height="31" viewBox="0 0 31 31" aria-hidden="true">
          <path d="M3 22 11 2h6l6 20h-6l-1-5H9l-2 5z" fill="#c5161d" />
          <path d="m11 13 2-7 2 7z" fill="#c4c6c8" />
          <path d="M3 22 11 2h3L8 15c4-2 9-2 13 1l2 6h-6l-2-5c-4-1-8 1-12 5z" fill="#e33a3e" />
          <path d="m9 15 5-2 7 3-2-6-5-8 2 10z" fill="#8f0d13" />
          <path d="M24 14h5l-2 4z" fill="#32363d" />
        </svg>
      </AppButton>
      <TitleBar>
        <TitleTools>
          {quick.map(([icon, label]) => <Tool key={icon} aria-label={label}><Glyph set={chrome} name={icon} /></Tool>)}
          <Tool $w={8} aria-label="放弃菜单"><Caret /></Tool>
          <Tool $w={20} aria-label="重做"><Glyph set={chrome} name="redo" /></Tool>
          <Tool $w={8} aria-label="重做菜单"><Caret /></Tool>
          <Tool $w={14} aria-label="自定义快速访问"><Caret wide /></Tool>
        </TitleTools>
        <Title><span>Autodesk AutoCAD 2020</span><span>Drawing1.dwg</span></Title>
        <TitleTools>
          <Tool $w={11} aria-label="展开搜索"><svg width="3" height="5" viewBox="0 0 3 5" aria-hidden="true"><path d="M0 0l3 2-3 3z" fill={W} /></svg></Tool>
          <Search aria-label="搜索" placeholder="键入关键字或短语" />
          <Tool $w={20} aria-label="搜索帮助"><Glyph set={chrome} name="binoc" /></Tool>
          <Tool $w={19} aria-label="用户"><Glyph set={chrome} name="user" /></Tool>
          <Tool $w={22}>登录</Tool>
          <Tool $w={56} $end aria-label="登录菜单"><Caret /></Tool>
        </TitleTools>
        <TitleTools>
          <Tool $w={18} aria-label="购物车"><Glyph set={chrome} name="cart" /></Tool>
          <Tool $w={18} aria-label="应用商店"><Glyph set={chrome} name="appStore" /></Tool>
          <Tool $w={8} aria-label="应用商店菜单"><Caret /></Tool>
          <Rule />
          <Tool $w={20} aria-label="帮助"><Glyph set={chrome} name="question" /></Tool>
          <Tool $w={8} aria-label="帮助菜单"><Caret /></Tool>
        </TitleTools>
        <WindowButtons>
          <Tool $w={28} aria-label="最小化"><Glyph set={chrome} name="min" /></Tool>
          <Tool $w={14} aria-label="最大化"><Glyph set={chrome} name="max" /></Tool>
          <Tool $w={25} aria-label="关闭"><Glyph set={chrome} name="close" /></Tool>
        </WindowButtons>
      </TitleBar>
      <Frame>
        <RibbonBar>
          <RibbonTabs>
            {tabs.map((t) => <RibbonTab key={t} $on={t === '机械'}>{t}</RibbonTab>)}
          </RibbonTabs>
          <Tool $w={56} aria-label="最小化功能区"><Glyph set={chrome} name="collapse" /><Caret /></Tool>
        </RibbonBar>
        <Ribbon>{panels.map((p) => <RibbonPanel key={p.name} p={p} />)}</Ribbon>
        <FileTabs>
          <FileTab $w={104}>开始</FileTab>
          <FileTab $w={98} $on>
            <span>Drawing1*</span>
            <svg width="7" height="7" viewBox="0 0 7 7" aria-hidden="true"><path d="m1 1 5 5M6 1 1 6" stroke="#b3b8be" strokeWidth="2" /></svg>
          </FileTab>
          <AddTab aria-label="新图形"><PlusMark /></AddTab>
        </FileTabs>
        <Workspace>
          <Palette>
            <PaletteTitle>
              <svg width="3" height="8" viewBox="0 0 3 8" aria-hidden="true"><path d="M1 0h2v2H1zM1 3h2v2H1zM1 6h2v2H1z" fill={W} /></svg>
              特性
            </PaletteTitle>
            <PaletteTools>
              <TypeSelect>
                <select aria-label="对象类型"><option>ParamWorks...</option></select>
                <Caret wide />
              </TypeSelect>
              <Tool $w={20} aria-label="切换选择"><Glyph set={chrome} name="blockSel" /></Tool>
              <Tool $w={18} aria-label="选择对象"><Glyph set={chrome} name="pick" /></Tool>
              <Tool $w={22} aria-label="快速选择"><Glyph set={chrome} name="quick" /></Tool>
            </PaletteTools>
            <PaletteBody>
              <PropTable rows={general} h={84} />
              <Section>参数块属性<Caret wide /></Section>
              <PropTable rows={block} h={67} />
              <Section>参数<Caret wide /></Section>
              <PropTable rows={params.map(([label, value]) => ({ label, value }))} h={150}>
                <tr>
                  <th scope="row"><b>图幅</b></th>
                  <td>
                    <SizeSelect>
                      <select aria-label="图幅"><option>A2</option></select>
                      <Caret wide />
                    </SizeSelect>
                  </td>
                </tr>
              </PropTable>
            </PaletteBody>
          </Palette>
          <Canvas>
            <Drawing />
            <ToolTabs>
              {toolTabs.map(([icon, label]) => (
                <ToolTab key={icon}><Glyph set={chrome} name={icon} size={12} /><span>{label}</span></ToolTab>
              ))}
            </ToolTabs>
            <ViewLabel>[-][俯视][二维线框]</ViewLabel>
            <WindowTools>
              <Tool $w={16} aria-label="最小化图形"><Glyph set={chrome} name="min" size={14} /></Tool>
              <Tool $w={16} aria-label="还原图形"><Glyph set={chrome} name="restore" size={8} /></Tool>
              <Tool $w={16} aria-label="关闭图形"><Glyph set={chrome} name="closeBold" size={8} /></Tool>
            </WindowTools>
            <Cube>
              <svg width="78" height="78" viewBox="0 0 78 78" aria-hidden="true">
                <circle cx="39" cy="39" r="30" fill="none" stroke="#3f4656" strokeWidth="7" />
                <g stroke="#535a69">
                  <path d="M12 20l7 5M20 12l5 7M29 8l2 6M49 8l-2 6M58 12l-5 7M66 20l-7 5M12 58l7-5M20 66l5-7M29 70l2-6M49 70l-2-6M58 66l-5-7M66 58l-7-5" />
                </g>
              </svg>
              <Side $cell="1 / 2">北</Side>
              <Side $cell="2 / 1">西</Side>
              <Top>上</Top>
              <Side $cell="2 / 3">东</Side>
              <Side $cell="3 / 2">南</Side>
            </Cube>
            <Wcs>WCS<Caret wide /></Wcs>
            <NavBar><NavIcons /></NavBar>
            <CommandLine>
              <CommandGrip>
                <svg width="5" height="14" viewBox="0 0 5 14" aria-hidden="true"><path d="M1 0v14M4 0v14" stroke={W} strokeDasharray="1 1" /></svg>
                <Tool $w={16} type="button" aria-label="关闭命令行"><Glyph set={chrome} name="closeBold" size={8} /></Tool>
                <Tool $w={20} type="button" aria-label="自定义命令行"><Glyph set={chrome} name="wrench" size={12} /></Tool>
              </CommandGrip>
              <label>
                <svg width="12" height="10" viewBox="0 0 12 10" aria-hidden="true"><path d="M0 1h12M0 9h12M2 3l3 2-3 2M6 7h5" stroke="#4a4d53" fill="none" /></svg>
                <svg width="5" height="3" viewBox="0 0 5 3" aria-hidden="true"><path d="M0 0h5L2 3z" fill="#6a6d73" /></svg>
                <input aria-label="命令" placeholder="键入命令" />
                <svg width="12" height="4" viewBox="0 0 12 4" aria-hidden="true"><path d="M3 3h5L6 0z" fill="#6a6d73" /></svg>
              </label>
            </CommandLine>
          </Canvas>
        </Workspace>
        <LayoutTabs>
          <LayoutTab $on>模型</LayoutTab>
          <LayoutTab>布局1</LayoutTab>
          <LayoutTab>布局2</LayoutTab>
          <LayoutTab aria-label="新建布局"><PlusMark /></LayoutTab>
        </LayoutTabs>
        <StatusBar>
          {status.map((g, i) => (
            <Group key={i}>
              {g.map((s) => (
                <StatusTool key={s.label} $w={s.w} $on={s.on} $bold={s.bold} aria-label={s.label}>
                  {s.text ?? (s.icon === 'drop' ? <Caret wide /> : <Glyph set={chrome} name={s.icon!} />)}
                </StatusTool>
              ))}
            </Group>
          ))}
        </StatusBar>
      </Frame>
    </Page>
  );
}
